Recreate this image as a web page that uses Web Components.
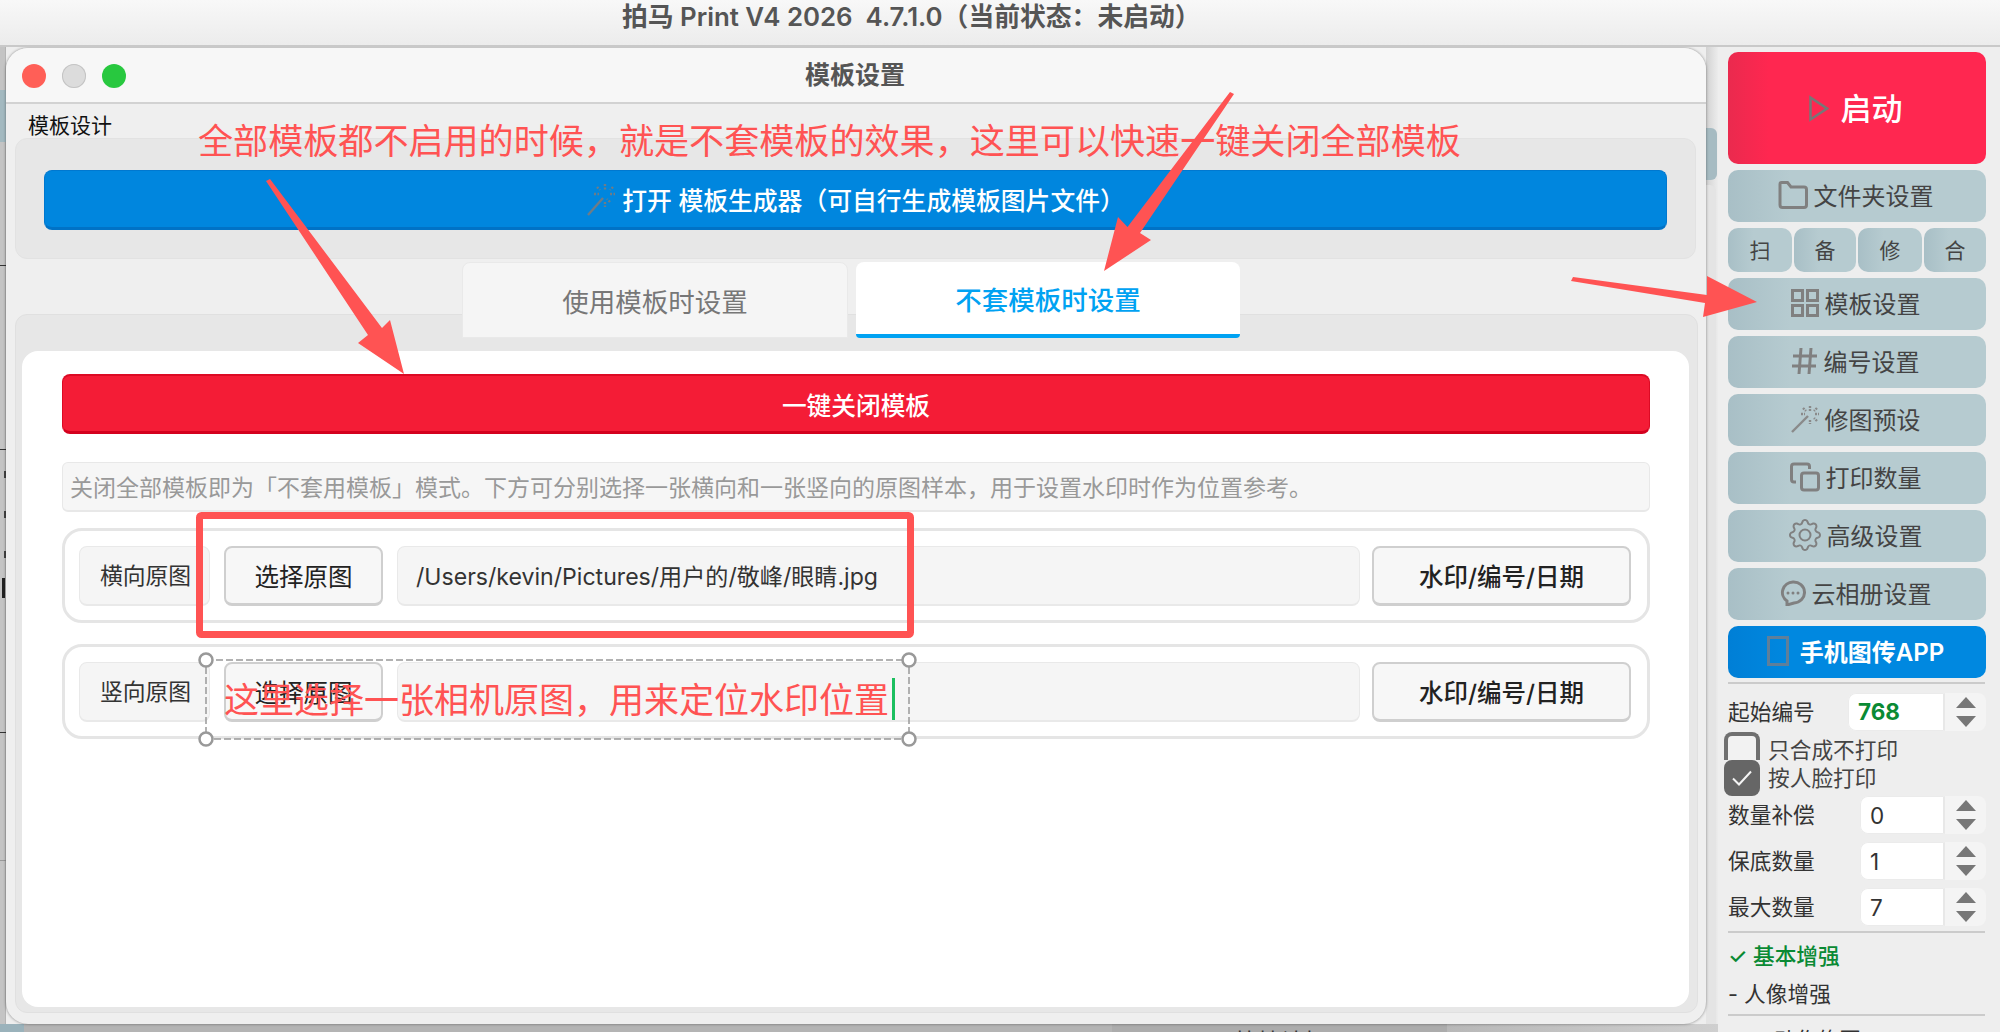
<!DOCTYPE html>
<html lang="zh">
<head>
<meta charset="utf-8">
<title>模板设置</title>
<style>
    html, body { margin: 0; height: 100%; overflow: hidden; }
    body { font-family: Inter, "Noto Sans CJK SC", sans-serif; background: #eeeeee; color: #333; }
</style>
</head>
<body>
<desk-app>
    <title-bar>拍马 Print V4 2026  4.7.1.0（当前状态：未启动）</title-bar>

    <mac-window slot="window" heading="模板设置">
        <span slot="label">模板设计</span>
        <tool-group>
            <wide-button tone="blue">
                <svg slot="icon" width="30" height="36" viewBox="0 0 30 36" fill="none" stroke="#6f7c86" stroke-width="2.4"><path d="M2 34 17 17"/><path d="M19 3v6M19 21v5M8 13h5M24 13h5M11 6l3 3M27 6l-3 3M24 21l-3-3" stroke-dasharray="2 1.5"/></svg>
                打开 模板生成器（可自行生成模板图片文件）
            </wide-button>
        </tool-group>
        <tab-strip>
            <tab-item>使用模板时设置</tab-item>
            <tab-item active>不套模板时设置</tab-item>
        </tab-strip>
        <tab-pane>
            <wide-button tone="red">一键关闭模板</wide-button>
            <hint-box>关闭全部模板即为「不套用模板」模式。下方可分别选择一张横向和一张竖向的原图样本，用于设置水印时作为位置参考。</hint-box>
            <photo-row label="横向原图" path="/Users/kevin/Pictures/用户的/敬峰/眼睛.jpg"></photo-row>
            <photo-row label="竖向原图"></photo-row>
        </tab-pane>
    </mac-window>

    <side-panel slot="side">
        <start-button>启动</start-button>
        <side-button>
            <svg slot="icon" width="30" height="28" viewBox="0 0 30 28" fill="none" stroke="#808080" stroke-width="3"><path d="M2 24V3q0-1.500 1.500-1.500h6L13 6h13q2.500 0 2.500 2.500V24q0 2.500-2.500 2.500H4.500Q2 26.500 2 24Z"/></svg>
            文件夹设置
        </side-button>
        <quick-row>
            <quick-key>扫</quick-key><quick-key narrow>备</quick-key><quick-key>修</quick-key><quick-key narrow>合</quick-key>
        </quick-row>
        <side-button>
            <svg slot="icon" width="28" height="28" viewBox="0 0 28 28" fill="none" stroke="#808080" stroke-width="3"><rect x="1.500" y="1.500" width="10" height="10"/><rect x="16.500" y="1.500" width="10" height="10"/><rect x="1.500" y="16.500" width="10" height="10"/><rect x="16.500" y="16.500" width="10" height="10"/></svg>
            模板设置
        </side-button>
        <side-button>
            <svg slot="icon" width="26" height="28" viewBox="0 0 26 28" fill="none" stroke="#808080" stroke-width="3"><path d="M9 1 7 27M19 1l-2 26M1 9h24M0 19h24"/></svg>
            编号设置
        </side-button>
        <side-button>
            <svg slot="icon" width="28" height="28" viewBox="0 0 28 28" fill="none" stroke="#8a8a8a" stroke-width="2.400"><path d="M1 27 17 11"/><path d="M19 1v5M19 15v4M10 9h4M24 9h4M12 3l3 3M26 3l-3 3M26 16l-3-3" stroke-dasharray="2 1"/></svg>
            修图预设
        </side-button>
        <side-button>
            <svg slot="icon" width="30" height="30" viewBox="0 0 30 30" fill="none" stroke="#808080" stroke-width="3"><path d="M6 20H4q-2.500 0-2.500-2.500v-13Q1.500 2 4 2h13q2.500 0 2.500 2.500V7"/><rect x="11.500" y="11" width="17" height="17" rx="2.500"/></svg>
            打印数量
        </side-button>
        <side-button>
            <svg slot="icon" width="32" height="32" viewBox="0 0 16 16" fill="#808080"><path d="M8 4.754a3.246 3.246 0 1 0 0 6.492 3.246 3.246 0 0 0 0-6.492zM5.754 8a2.246 2.246 0 1 1 4.492 0 2.246 2.246 0 0 1-4.492 0z"/><path d="M9.796 1.343c-.527-1.790-3.065-1.790-3.592 0l-.094.319a.873.873 0 0 1-1.255.520l-.292-.160c-1.640-.892-3.433.902-2.540 2.541l.159.292a.873.873 0 0 1-.520 1.255l-.319.094c-1.790.527-1.790 3.065 0 3.592l.319.094a.873.873 0 0 1 .520 1.255l-.160.292c-.892 1.640.901 3.434 2.541 2.540l.292-.159a.873.873 0 0 1 1.255.520l.094.319c.527 1.790 3.065 1.790 3.592 0l.094-.319a.873.873 0 0 1 1.255-.520l.292.160c1.640.893 3.434-.902 2.540-2.541l-.159-.292a.873.873 0 0 1 .520-1.255l.319-.094c1.790-.527 1.790-3.065 0-3.592l-.319-.094a.873.873 0 0 1-.520-1.255l.160-.292c.893-1.640-.902-3.433-2.541-2.540l-.292.159a.873.873 0 0 1-1.255-.520l-.094-.319zm-2.633.283c.246-.835 1.428-.835 1.674 0l.094.319a1.873 1.873 0 0 0 2.693 1.115l.291-.160c.764-.415 1.600.420 1.184 1.185l-.159.292a1.873 1.873 0 0 0 1.116 2.692l.318.094c.835.246.835 1.428 0 1.674l-.319.094a1.873 1.873 0 0 0-1.115 2.693l.160.291c.415.764-.420 1.600-1.185 1.184l-.291-.159a1.873 1.873 0 0 0-2.693 1.116l-.094.318c-.246.835-1.428.835-1.674 0l-.094-.319a1.873 1.873 0 0 0-2.692-1.115l-.292.160c-.764.415-1.600-.420-1.184-1.185l.159-.291A1.873 1.873 0 0 0 1.945 8.930l-.319-.094c-.835-.246-.835-1.428 0-1.674l.319-.094A1.873 1.873 0 0 0 3.060 4.377l-.160-.292c-.415-.764.420-1.600 1.185-1.184l.292.159a1.873 1.873 0 0 0 2.692-1.115l.094-.319z"/></svg>
            高级设置
        </side-button>
        <side-button>
            <svg slot="icon" width="26" height="26" viewBox="0 0 26 26" fill="none" stroke="#808080" stroke-width="3"><path d="M13 2a11 10.500 0 0 1 1 21l-7 2v-4A11 10.500 0 0 1 13 2Z"/><circle cx="8" cy="13" r="1.500" fill="#808080" stroke="none"/><circle cx="13" cy="13" r="1.500" fill="#808080" stroke="none"/><circle cx="18" cy="13" r="1.500" fill="#808080" stroke="none"/></svg>
            云相册设置
        </side-button>
        <side-button tone="blue">
            <svg slot="icon" width="22" height="30" viewBox="0 0 22 30" fill="none" stroke="#5f7f9a" stroke-width="3"><rect x="1.500" y="1.500" width="19" height="27"/></svg>
            手机图传APP
        </side-button>
        <side-rule first></side-rule>
        <spin-row label="起始编号" value="768" accent></spin-row>
        <check-row>只合成不打印</check-row>
        <check-row checked>按人脸打印</check-row>
        <spin-row label="数量补偿" value="0"></spin-row>
        <spin-row label="保底数量" value="1"></spin-row>
        <spin-row label="最大数量" value="7"></spin-row>
        <side-rule></side-rule>
        <menu-line on>✓ 基本增强</menu-line>
        <menu-line>- 人像增强</menu-line>
        <side-rule last></side-rule>
        <menu-line sub>- 动作修图</menu-line>
    </side-panel>

    <mark-up slot="overlay"></mark-up>
</desk-app>

<script>
/* Define the page components */
(function(){

    // Build a custom element from a block of markup, with optional attribute-driven setup
    function define(name, html, setup) {
        const template = document.createElement('template');
        template.innerHTML = html;
        customElements.define(name, class extends HTMLElement {
            constructor() {
                super();
                this.attachShadow({ mode: 'open' }).append(template.content.cloneNode(true));
            }
            connectedCallback() {
                if (setup) setup(this, this.shadowRoot);
            }
        });
    }

    // Outer frame: what lies behind the window, then title bar, window and side panel
    define('desk-app', `
    <style>
    :host { display: block; position: relative; width: 2000px; height: 1032px; overflow: hidden; background: #eeeeee; }
    #main { display: flex; height: 985px; }
    #left { width: 1718px; flex: none; padding: 1px 0 0 6px; box-sizing: border-box; position: relative; z-index: 1; }
    .under { position: absolute; }
    #strip { left: 0; top: 47px; width: 6px; height: 985px; background: #c4c4c4; border-right: 1px solid #b4b4b4; box-sizing: border-box; }
    #teal { left: 0; top: 90px; width: 6px; height: 52px; background: #a3b9c0; }
    .line { left: 0; width: 6px; height: 1px; background: #333; }
    .tick { left: 4px; width: 2px; height: 7px; background: #444; }
    #edge { left: 1706px; top: 47px; width: 12px; height: 985px; background: linear-gradient(90deg, #d2d2d2, #ececec); }
    #edgeTeal { left: 1706px; top: 128px; width: 11px; height: 52px; background: #a6bbc2; border-radius: 0 6px 6px 0; }
    #edgeCard { left: 1706px; top: 185px; width: 10px; height: 847px; background: #e4e4e4; border-radius: 0 6px 0 0; }
    #floor { left: 0; top: 1024px; width: 1718px; height: 8px; overflow: hidden; background: #b4b4b4; }
    #floorTeal { position: absolute; left: 0; top: 0; width: 24px; height: 8px; background: #9ab2bb; }
    #floorTab { position: absolute; left: 1112px; top: 0; width: 335px; height: 8px; background: #acacac; }
    #floorRight { position: absolute; left: 1447px; top: 0; width: 271px; height: 8px; background: linear-gradient(90deg, #b8b8b8, #cfcfcf); }
    #floorText { position: absolute; left: 123px; top: 2px; width: 100px; font-size: 23px; line-height: 32px; color: #333; white-space: nowrap; }
    </style>
    <slot></slot>
    <div class="under" id="strip"></div>
    <div class="under" id="teal"></div>
    <div class="under line" style="top:265px"></div>
    <div class="under line" style="top:449px"></div>
    <div class="under tick" style="top:471px"></div>
    <div class="under tick" style="top:511px"></div>
    <div class="under tick" style="top:551px"></div>
    <div class="under tick" style="top:578px;height:20px;left:2px;width:3px;background:#222"></div>
    <div class="under line" style="top:732px"></div>
    <div class="under line" style="top:860px;background:#999"></div>
    <div class="under" id="edge"></div>
    <div class="under" id="edgeTeal"></div>
    <div class="under" id="edgeCard"></div>
    <div class="under" id="floor">
        <div id="floorTeal"></div>
        <div id="floorTab"><div id="floorText">快捷认打</div></div>
        <div id="floorRight"></div>
    </div>
    <div id="main">
        <div id="left"><slot name="window"></slot></div>
        <slot name="side"></slot>
    </div>
    <slot name="overlay"></slot>
    `);

    define('title-bar', `
    <style>
    :host { display: block; height: 47px; box-sizing: border-box; border-bottom: 2px solid #c9c9c9; background: linear-gradient(#f8f8f8, #ececec);
        position: relative; z-index: 2; }
    div { padding-left: 622px; font-size: 25.800px; line-height: 33px; font-weight: 600; color: #555; white-space: pre; }
    </style>
    <div><slot></slot></div>
    `);

    // The floating dialog window
    define('mac-window', `
    <style>
    :host { display: flex; flex-direction: column; width: 1700px; height: 976px; background: #efefef; border-radius: 22px;
        overflow: hidden; box-shadow: 0 0 3px rgba(0,0,0,.45); }
    header { height: 56px; flex: none; position: relative; box-sizing: border-box; background: #f7f7f7; border-bottom: 2px solid #d2d2d2;
        text-align: center; font-size: 25px; font-weight: 600; line-height: 54px; color: #555; padding-right: 2px; }
    #lights { position: absolute; left: 16px; top: 16px; display: flex; gap: 16px; }
    #lights i { width: 24px; height: 24px; border-radius: 50%; }
    #body { flex: 1; display: flex; flex-direction: column; padding: 10px 8px 11px 9px; min-height: 0; }
    #label { margin-left: 13px; font-size: 21px; line-height: 24px; color: #111; }
    </style>
    <header>
        <div id="lights">
            <i style="background:#ff5f57"></i>
            <i style="background:#dcdcdc;box-shadow:inset 0 0 0 1px #c4c4c4"></i>
            <i style="background:#28c83f"></i>
        </div>
        <span id="heading"></span>
    </header>
    <div id="body">
        <div id="label"><slot name="label"></slot></div>
        <slot></slot>
    </div>
    `, (el, root) => { root.getElementById('heading').textContent = el.getAttribute('heading'); });

    define('tool-group', `
    <style>
    :host { display: block; height: 121px; box-sizing: border-box; padding: 31px 28px 0 28px; margin-right: 2px; background: #e7e7e7;
        border: 1px solid #e2e2e2; border-radius: 12px; }
    </style>
    <slot></slot>
    `);

    // Full width flat button, blue or red
    define('wide-button', `
    <style>
    :host { display: flex; align-items: center; justify-content: center; gap: 6px; height: 60px; box-sizing: border-box; border-radius: 8px;
        color: #fff; font-size: 24.800px; font-weight: 500; background: #0086de; border: 1px solid #0078cf; border-bottom: 3px solid #0072c6; white-space: nowrap; }
    :host([tone="red"]) { background: #f41c36; border-color: #dc0a24; border-top: 2px solid #dc0a24; border-bottom: 3px solid #d4001e; font-size: 24.700px; }
    </style>
    <slot name="icon"></slot><slot></slot>
    `);

    define('tab-strip', `
    <style>
    :host { display: flex; gap: 8px; padding-left: 447px; margin-top: 3px; height: 76px; position: relative; z-index: 1; margin-bottom: -24px; }
    </style>
    <slot></slot>
    `);

    define('tab-item', `
    <style>
    :host { display: flex; align-items: center; justify-content: center; width: 386px; box-sizing: border-box; border-radius: 8px 8px 0 0;
        background: #f5f5f5; border: 1px solid #e9e9e9; font-size: 26.500px; color: #777; }
    :host([active]) { width: 384px; background: #fff; color: #00a2f2; font-weight: 500; border: 0; border-bottom: 4px solid #00a2f2; border-radius: 8px 8px 4px 4px; }
    </style>
    <slot></slot>
    `);

    // Grey band with the white card in it
    define('tab-pane', `
    <style>
    :host { display: block; flex: 1; min-height: 0; box-sizing: border-box; padding: 36px 8px 5px 6px; background: #e7e7e7; border: 1px solid #e0e0e0; border-radius: 12px; }
    #card { height: 100%; box-sizing: border-box; background: #fff; border-radius: 16px; padding: 23px 39px 0 40px; display: flex; flex-direction: column; }
    </style>
    <div id="card"><slot></slot></div>
    `);

    define('hint-box', `
    <style>
    :host { display: flex; align-items: center; height: 50px; box-sizing: border-box; margin: 28px 0 16px; padding: 0 0 2px 7px; background: #f6f6f6;
        border: 1px solid #e8e8e8; border-bottom-width: 2px; border-radius: 6px; font-size: 23px; color: #999; white-space: nowrap; overflow: hidden; }
    </style>
    <slot></slot>
    `);

    // One "choose a sample photo" row
    define('photo-row', `
    <style>
    :host { display: flex; gap: 14px; height: 95px; box-sizing: border-box; padding: 15px 16px 14px 14px; margin-bottom: 21px; border: 3px solid #e5e5e5; border-radius: 20px; }
    div, button { height: 60px; box-sizing: border-box; padding-bottom: 2px; border-radius: 8px; display: flex; align-items: center; justify-content: center; font: inherit; white-space: nowrap; }
    #label { width: 131px; padding-left: 2px; background: #f5f5f5; border: 1px solid #e9e9e9; border-bottom-width: 2px; font-size: 22.800px; color: #333; }
    button { background: #f7f7f7; border: 2px solid #cfcfcf; border-bottom-width: 3px; color: #222; }
    #pick { width: 159px; font-size: 24.500px; }
    #path { flex: 1; justify-content: flex-start; padding-left: 18px; background: #f5f5f5; border: 1px solid #e9e9e9; border-bottom-width: 2px; font-size: 23.100px; color: #333; }
    #mark { width: 259px; margin-left: -2px; font-size: 24.500px; font-weight: 500; }
    </style>
    <div id="label"></div>
    <button id="pick">选择原图</button>
    <div id="path"></div>
    <button id="mark">水印/编号/日期</button>
    `, (el, root) => {
        root.getElementById('label').textContent = el.getAttribute('label');
        root.getElementById('path').textContent = el.getAttribute('path') || '';
    });

    // Right hand column
    define('side-panel', `
    <style>
    :host { display: flex; flex-direction: column; gap: 6px; width: 258px; margin-left: 10px; padding-top: 5px; flex: none; position: relative; z-index: 1; }
    ::slotted(*) { flex: none; }
    </style>
    <slot></slot>
    `);

    define('start-button', `
    <style>
    :host { display: flex; align-items: center; justify-content: center; gap: 10px; height: 112px; box-sizing: border-box; padding: 0 3px 4px 0; border-radius: 10px; color: #fff; font-size: 31px; font-weight: 500;
        background: linear-gradient(90deg, #ea2a4e, #ff2750 16%); }
    svg { margin: 4px 2px 0 0; }
    </style>
    <svg width="20" height="27" viewBox="0 0 20 27" fill="none" stroke="#777" stroke-width="2.500"><path d="M1.500 2.500 18 13.500 1.500 24.500Z"/></svg>
    <slot></slot>
    `);

    define('side-button', `
    <style>
    :host { display: flex; align-items: center; justify-content: center; gap: 6px; height: 52px; box-sizing: border-box; padding: 0 3px 3px 0; border-radius: 10px; color: #444; font-size: 24px; white-space: nowrap;
        background: linear-gradient(90deg, #a8bfc6, #b6cbd0 24%); }
    :host([tone="blue"]) { background: linear-gradient(90deg, #007fd6, #0088e0 24%); color: #fff; font-weight: 600; gap: 11px; }
    ::slotted(svg) { flex: none; }
    </style>
    <slot name="icon"></slot><slot></slot>
    `);

    define('quick-row', `
    <style>
    :host { display: flex; gap: 2px; height: 44px; }
    </style>
    <slot></slot>
    `);

    define('quick-key', `
    <style>
    :host { display: flex; align-items: center; justify-content: center; width: 64px; box-sizing: border-box; padding-bottom: 2px; border-radius: 10px; font-size: 21px; color: #444;
        background: linear-gradient(90deg, #a8bfc6, #b6cbd0 40%); }
    :host([narrow]) { width: 62px; }
    </style>
    <slot></slot>
    `);

    define('side-rule', `
    <style>
    :host { display: block; height: 2px; background: #cbcbcb; width: 257px; margin: -3px 0 0; }
    :host([first]) { margin: -2px 0 3px; }
    :host([last]) { margin: 1px 0 0; }
    </style>
    `);

    // Label + number field + up/down arrows
    define('spin-row', `
    <style>
    :host { display: flex; align-items: center; height: 38px; margin-bottom: 2px; font-size: 21.700px; color: #333; }
    :host([accent]) { margin-bottom: -5px; }
    #label { flex: 1; white-space: nowrap; padding-bottom: 4px; }
    #box { display: flex; height: 38px; border-radius: 8px; overflow: hidden; background: #f4f4f4; }
    #value { width: 85px; box-sizing: border-box; background: #fff; padding-left: 9px; border: 1px solid #ebebeb; border-right: 2px solid #e8e8e8; border-radius: 8px 0 0 8px;
        font-size: 22.500px; line-height: 37px; color: #333; }
    :host([accent]) #value { width: 97px; color: #0a8a34; font-weight: 700; line-height: 35px; }
    #arrows { width: 41px; display: flex; flex-direction: column; align-items: center; gap: 8px; padding-top: 4px; box-sizing: border-box; }
    i { display: block; width: 0; height: 0; border-left: 10px solid transparent; border-right: 10px solid transparent; }
    #up { border-bottom: 11px solid #777; }
    #down { border-top: 11px solid #777; }
    </style>
    <div id="label"></div>
    <div id="box"><div id="value"></div><div id="arrows"><i id="up"></i><i id="down"></i></div></div>
    `, (el, root) => {
        root.getElementById('label').textContent = el.getAttribute('label');
        root.getElementById('value').textContent = el.getAttribute('value');
    });

    // Checkbox line, the two boxes sit tight against each other
    define('check-row', `
    <style>
    :host { display: flex; align-items: center; gap: 8px; height: 28px; margin: 0 0 -6px -4px; font-size: 21.700px; color: #444; white-space: nowrap; }
    :host([checked]) { height: 36px; }
    #box { width: 36px; height: 28px; flex: none; box-sizing: border-box; background: #f2f2f2; border: 4px solid #707070; border-bottom: 0; border-radius: 8px 8px 0 0; }
    :host([checked]) #box { height: 36px; background: #666; border: 0; border-radius: 8px; display: flex; align-items: center; justify-content: center; }
    #text { padding-top: 8px; line-height: 30px; }
    :host([checked]) #text { padding-top: 0; }
    svg { display: none; }
    :host([checked]) svg { display: block; }
    </style>
    <div id="box"><svg width="22" height="18" viewBox="0 0 22 18" fill="none" stroke="#f4f4f4" stroke-width="2"><path d="M2 9.500 8 15.500 20 2.500"/></svg></div>
    <div id="text"><slot></slot></div>
    `);

    define('menu-line', `
    <style>
    :host { display: block; height: 37px; margin-bottom: -6px; font-size: 21.700px; line-height: 37px; color: #333; white-space: nowrap; }
    :host([on]) { color: #0a8a34; font-weight: 500; line-height: 35px; }
    :host([sub]) { padding-left: 30px; margin-bottom: 0; }
    </style>
    <slot></slot>
    `);

    // Annotations drawn on top of the screenshot: these live on a free canvas
    define('mark-up', `
    <style>
    :host { position: absolute; left: 0; top: 0; width: 2000px; height: 1032px; z-index: 5; pointer-events: none; color: #ff5353; }
    svg { position: absolute; left: 0; top: 0; }
    .note { position: absolute; font-size: 35px; line-height: 50px; white-space: nowrap; }
    #caret { position: absolute; left: 892px; top: 678px; width: 3px; height: 42px; background: #1bbf5f; }
    </style>
    <svg width="2000" height="1032" viewBox="0 0 2000 1032">
        <g fill="#ff5353">
            <polygon points="266,181 270,179 382,328 390,320 404,374 358,343 368,335"/>
            <polygon points="1230,92 1234,94 1140,233 1151,240 1104,271 1118,217 1127.500,227"/>
            <polygon points="1571,281 1573,277 1707,295 1707,276 1757,302 1703,317 1705,303"/>
        </g>
        <rect x="199.500" y="515.500" width="711" height="119" rx="2" fill="none" stroke="#ff5353" stroke-width="7"/>
        <rect x="206" y="660" width="703" height="79" fill="none" stroke="#999" stroke-width="1.500" stroke-dasharray="7 3"/>
        <g fill="#fff" stroke="#999" stroke-width="2.500">
            <circle cx="206" cy="660" r="6.500"/><circle cx="909" cy="660" r="6.500"/>
            <circle cx="206" cy="739" r="6.500"/><circle cx="909" cy="739" r="6.500"/>
        </g>
    </svg>
    <div class="note" style="left:198px;top:116px;font-size:35.100px">全部模板都不启用的时候，就是不套模板的效果，这里可以快速一键关闭全部模板</div>
    <div class="note" style="left:224px;top:675px">这里选择一张相机原图，用来定位水印位置</div>
    <div id="caret"></div>
    `);

}) ();
</script>
</body>
</html>
